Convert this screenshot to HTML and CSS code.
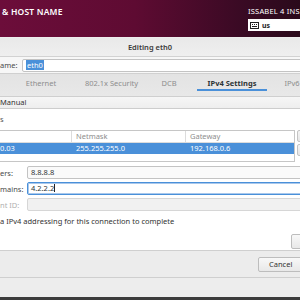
FILE: index.html
```html
<!DOCTYPE html>
<html lang="en">

<head>
    <meta charset="UTF-8">
    <title>Editing eth0</title>
    <link rel="stylesheet" href="styles.css">
</head>

<body>
    <div class="screen">
        <!-- Installer top bar -->
        <header class="topbar">
            <div class="spoke_title">&amp; HOST NAME</div>
            <div class="install_info">
                <div class="product">ISSABEL 4 INS</div>
                <div class="kbd_box">
                    <svg class="kbd_icon" width="9" height="7" viewBox="0 0 9 7">
                        <rect x="0.5" y="0.5" width="8" height="6" fill="#fff" stroke="#222" />
                        <rect x="2" y="2" width="1" height="1" fill="#222" />
                        <rect x="4" y="2" width="1" height="1" fill="#222" />
                        <rect x="6" y="2" width="1" height="1" fill="#222" />
                        <rect x="2" y="4" width="5" height="1" fill="#222" />
                    </svg>
                    <span class="kbd_text">us</span>
                </div>
            </div>
        </header>

        <!-- Dialog -->
        <div class="dialog">
            <div class="dlg_title">Editing eth0</div>
            <div class="name_row">
                <span class="lbl">ame:</span>
                <div class="entry name_entry"><span class="selected_text">eth0</span></div>
            </div>
            <nav class="tabs">
                <span class="tab">Ethernet</span>
                <span class="tab">802.1x Security</span>
                <span class="tab">DCB</span>
                <span class="tab tab_active">IPv4 Settings</span>
                <span class="tab">IPv6</span>
            </nav>

            <div class="panel">
                <div class="method_combo">Manual</div>
                <div class="section_lbl">s</div>

                <div class="addr_row">
                    <div class="addr_table">
                        <div class="addr_line addr_head">
                            <span class="col col_addr"></span>
                            <span class="col col_mask">Netmask</span>
                            <span class="col col_gw">Gateway</span>
                        </div>
                        <div class="addr_line addr_sel">
                            <span class="col col_addr">0.03</span>
                            <span class="col col_mask">255.255.255.0</span>
                            <span class="col col_gw">192.168.0.6</span>
                        </div>
                    </div>
                    <div class="side_btns">
                        <div class="side_btn"></div>
                        <div class="side_btn"></div>
                    </div>
                </div>

                <div class="field_row">
                    <span class="lbl">ers:</span>
                    <div class="entry">8.8.8.8</div>
                </div>
                <div class="field_row">
                    <span class="lbl">mains:</span>
                    <div class="entry entry_focus">4.2.2.2<span class="caret"></span></div>
                </div>
                <div class="field_row">
                    <span class="lbl lbl_off">nt ID:</span>
                    <div class="entry entry_off"></div>
                </div>

                <div class="check_row">a IPv4 addressing for this connection to complete</div>
                <div class="routes_row"><div class="btn routes_btn"></div></div>
            </div>

            <div class="footer">
                <div class="btn cancel_btn">Cancel</div>
            </div>
            <div class="bottom_strip"></div>
        </div>
    </div>
</body>

</html>
```

FILE: styles.css
```css
body {
    margin: 0;
    font-family: "Noto Sans", "DejaVu Sans", sans-serif;
    font-size: 7.5px;
    color: #2e3436;
}

.screen {
    width: 300px;
    height: 300px;
    overflow: hidden;
    background-color: #ededed;
}

/* Top bar */
.topbar {
    height: 37px;
    display: flex;
    justify-content: space-between;
    background: linear-gradient(to right, #6c0d3a 0%, #5e0b32 45%, #3a0a24 80%, #2a0a1b 100%);
    color: #fff;
}

.spoke_title {
    padding: 6px 0 0 2px;
    font-size: 8.5px;
    font-weight: 600;
    letter-spacing: 0.2px;
}

.install_info {
    width: 52px;
    padding-top: 6px;
}

.product {
    font-size: 7.5px;
    white-space: nowrap;
    letter-spacing: 0.2px;
}

.kbd_box {
    margin-top: 3px;
    height: 12px;
    background-color: #fff;
    display: flex;
    align-items: center;
    padding-left: 2px;
    gap: 3px;
}

.kbd_text {
    color: #222;
    font-weight: 700;
    font-size: 7px;
}

/* Dialog */
.dialog {
    margin-top: 1px;
    width: 330px;
}

.dlg_title {
    height: 18px;
    line-height: 18px;
    text-align: center;
    width: 300px;
    font-weight: 600;
    color: #3a3a3a;
    background: linear-gradient(#e9e9e9, #efefef);
    border-bottom: 1px solid #d2d2d2;
}

.name_row {
    height: 16px;
    display: flex;
    align-items: center;
    background-color: #f7f7f7;
    border-bottom: 1px solid #d0d0d0;
}

.lbl {
    color: #4a4a4a;
    white-space: nowrap;
}

.name_row .lbl {
    width: 22px;
}

.entry {
    height: 11px;
    line-height: 11px;
    border: 1px solid #c3c3c3;
    border-radius: 2px;
    background-color: #fff;
    padding-left: 3px;
    flex: 1;
}

.selected_text {
    background-color: #4a90d9;
    color: #fff;
    padding: 0 1px;
}

/* Tabs */
.tabs {
    height: 22px;
    display: grid;
    grid-template-columns: 82px 59px 56px 70px 50px;
    background: linear-gradient(#e3e3e3, #e8e8e8);
    border-bottom: 1px solid #cfcfcf;
}

.tab {
    text-align: center;
    line-height: 18px;
    color: #8d8d8d;
    white-space: nowrap;
    height: 15px;
}

.tab_active {
    color: #2e3436;
    font-weight: 700;
    border-bottom: 2px solid #4a90d9;
}

/* Panel */
.panel {
    background-color: #fff;
    border-bottom: 1px solid #cfcfcf;
    height: 153px;
}

.method_combo {
    height: 11px;
    line-height: 11px;
    background: linear-gradient(#f6f6f6, #eeeeee);
    border-bottom: 1px solid #cdcdcd;
    color: #333;
}

.section_lbl {
    height: 21px;
    line-height: 20px;
    color: #555;
}

.addr_row {
    display: flex;
    gap: 2px;
}

.addr_table {
    width: 294px;
    height: 30px;
    border: 1px solid #c6c6c6;
    border-left: none;
}

.addr_line {
    height: 11px;
    line-height: 11px;
    display: flex;
    white-space: nowrap;
}

.addr_head {
    color: #8e8e8e;
    border-bottom: 1px solid #dcdcdc;
}

.addr_sel {
    background-color: #4a90d9;
    color: #fff;
}

.col {
    padding-left: 4px;
}

.col_addr {
    width: 71px;
    padding-left: 0;
}

.addr_head .col_mask,
.addr_head .col_gw {
    border-left: 1px solid #dcdcdc;
}

.addr_sel .col_mask,
.addr_sel .col_gw {
    border-left: 1px solid #4a90d9;
}

.col_mask {
    width: 109px;
}

.side_btns {
    display: flex;
    flex-direction: column;
    gap: 2px;
}

.side_btn {
    width: 12px;
    height: 10px;
    border: 1px solid #c4c4c4;
    border-radius: 2px;
    background: linear-gradient(#f4f4f4, #e6e6e6);
}

.field_row {
    display: flex;
    align-items: center;
    height: 13px;
    margin-top: 3px;
    width: 300px;
}

.addr_row + .field_row {
    margin-top: 4px;
}

.field_row .lbl {
    width: 27px;
}

.field_row .entry {
    margin-right: -5px;
    background-color: #fafafa;
}

.entry_focus {
    border-color: #4a90d9;
    box-shadow: inset 0 0 0 1px #a9c8ec;
    background-color: #fff !important;
}

.caret {
    display: inline-block;
    width: 1px;
    height: 8px;
    background-color: #222;
    vertical-align: -1px;
}

.lbl_off {
    color: #b0b0b0;
}

.entry_off {
    background-color: #f1f1f1 !important;
    border-color: #d6d6d6;
}

.check_row {
    margin-top: 4px;
    height: 12px;
    line-height: 12px;
    white-space: nowrap;
    color: #333;
}

.routes_row {
    margin-top: 7px;
    padding-left: 291px;
}

.btn {
    border: 1px solid #bdbdbd;
    border-radius: 2px;
    background: linear-gradient(#f8f8f8, #e8e8e8);
}

.routes_btn {
    height: 13px;
    width: 30px;
}

.footer {
    height: 25px;
    padding-top: 1px;
    padding-left: 258px;
    display: flex;
    align-items: center;
    border-bottom: 1px solid #cfcfcf;
    background-color: #ececec;
}

.cancel_btn {
    height: 13px;
    line-height: 13px;
    width: 42px;
    padding-left: 10px;
    color: #333;
}

.bottom_strip {
    height: 19px;
    background-color: #ededed;
    border-bottom: 4px solid #3c3c3c;
}
```
